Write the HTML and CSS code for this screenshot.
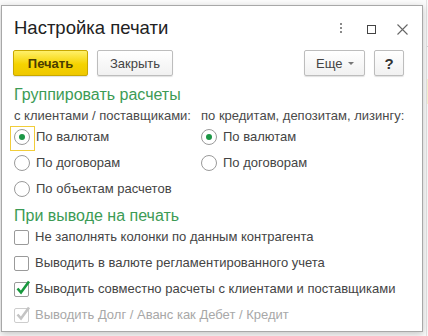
FILE: index.html
```html
<!DOCTYPE html>
<html lang="ru">
<head>
    <meta charset="UTF-8">
    <title>Настройка печати</title>
    <link rel="stylesheet" href="styles.css">
</head>
<body>
    <div class="desk">
        <div class="dialog">
            <div class="title-bar">
                <div class="title">Настройка печати</div>
                <div class="title-icons">
                    <svg class="ico-more" width="4" height="12" viewBox="0 0 4 12">
                        <rect x="1" y="0" width="2" height="2" fill="#8a8a8a"/>
                        <rect x="1" y="4" width="2" height="2" fill="#8a8a8a"/>
                        <rect x="1" y="8" width="2" height="2" fill="#8a8a8a"/>
                    </svg>
                    <svg class="ico-max" width="9" height="9" viewBox="0 0 9 9">
                        <rect x="0.5" y="0.5" width="8" height="8" fill="none" stroke="#444"/>
                    </svg>
                    <svg class="ico-close" width="11" height="11" viewBox="0 0 11 11">
                        <path d="M0.5 0.5 L10.5 10.5 M10.5 0.5 L0.5 10.5" stroke="#666" stroke-width="1.1"/>
                    </svg>
                </div>
            </div>

            <div class="toolbar">
                <button class="btn btn-default">Печать</button>
                <button class="btn">Закрыть</button>
                <div class="spacer"></div>
                <button class="btn btn-more">Еще <span class="caret"></span></button>
                <button class="btn btn-help">?</button>
            </div>

            <div class="group-title">Группировать расчеты</div>
            <div class="columns">
                <div class="col col-left">
                    <div class="sub">с клиентами / поставщиками:</div>
                    <label class="row focused"><span class="radio checked"></span>По валютам</label>
                    <label class="row"><span class="radio"></span>По договорам</label>
                    <label class="row"><span class="radio"></span>По объектам расчетов</label>
                </div>
                <div class="col">
                    <div class="sub">по кредитам, депозитам, лизингу:</div>
                    <label class="row"><span class="radio checked"></span>По валютам</label>
                    <label class="row"><span class="radio"></span>По договорам</label>
                </div>
            </div>

            <div class="group-title second">При выводе на печать</div>
            <label class="row"><span class="check"></span>Не заполнять колонки по данным контрагента</label>
            <label class="row"><span class="check"></span>Выводить в валюте регламентированного учета</label>
            <label class="row"><span class="check checked"><svg width="17" height="17" viewBox="0 0 17 17"><path d="M3.5 8.5 L7 12.5 L15 1.5" fill="none" stroke="#17983d" stroke-width="2.6"/></svg></span>Выводить совместно расчеты с клиентами и поставщиками</label>
            <label class="row disabled"><span class="check checked"><svg width="17" height="17" viewBox="0 0 17 17"><path d="M3.5 8.5 L7 12.5 L15 1.5" fill="none" stroke="#c4c4c4" stroke-width="2.6"/></svg></span>Выводить Долг / Аванс как Дебет / Кредит</label>
        </div>

        <div class="backdrop">
            <div class="bg-head"></div>
            <div class="bg-row"></div>
        </div>
    </div>
</body>
</html>
```

FILE: styles.css
```css
* {
    box-sizing: border-box;
    margin: 0;
    padding: 0;
}

body {
    font-family: Arial, "Liberation Sans", sans-serif;
    font-size: 13px;
    color: #444;
    background: #fbfbfb;
    width: 428px;
    height: 336px;
    overflow: hidden;
}

.desk {
    display: flex;
    align-items: flex-start;
}

.dialog {
    flex: none;
    width: 422px;
    height: 327px;
    margin: 5px 0 0 1px;
    padding: 0 11px 0 11px;
    background: #fff;
    border: 1px solid #a8a8a8;
    box-shadow: 0 2px 7px rgba(0, 0, 0, 0.22);
    position: relative;
    z-index: 1;
}

.backdrop {
    flex: 1;
    height: 336px;
    border-left: 1px solid #e2e2e2;
    margin-left: 3px;
}

.bg-head {
    height: 42px;
    margin-top: 5px;
    border-bottom: 1px solid #d4d4d4;
    background: #fafafa;
}

.bg-row {
    height: 25px;
    margin-top: 32px;
    background: #fbf2d3;
}

/* title */

.title-bar {
    display: flex;
    align-items: center;
    height: 22px;
    margin-top: 11px;
}

.title {
    flex: 1;
    font-size: 18.5px;
    line-height: 22px;
    color: #222;
    padding-left: 1px;
}

.title-icons {
    display: flex;
    align-items: center;
    margin-right: 3px;
}

.ico-more {
    margin-right: 24px;
    margin-top: 2px;
}

.ico-max {
    margin-right: 21px;
    margin-top: 3px;
}

.ico-close {
    margin-top: 2px;
}

/* buttons */

.toolbar {
    display: flex;
    margin-top: 11px;
    height: 26px;
}

.spacer {
    flex: 1;
}

.btn {
    height: 26px;
    min-width: 76px;
    padding: 0 12px;
    font-family: inherit;
    font-size: 13px;
    color: #444;
    background: linear-gradient(#ffffff, #f1f1f1);
    border: 1px solid #bdbdbd;
    border-radius: 2px;
    box-shadow: 0 1px 1px rgba(0, 0, 0, 0.12);
    margin-right: 9px;
}

.btn-default {
    min-width: 75px;
    font-weight: bold;
    color: #4a3d00;
    background: linear-gradient(#fff06a, #f5d300 55%, #efc800);
    border-color: #c8a800;
}

.btn-more {
    min-width: 61px;
    padding: 0 9px 0 11px;
    display: flex;
    align-items: center;
    gap: 6px;
}

.caret {
    width: 0;
    height: 0;
    border-left: 3px solid transparent;
    border-right: 3px solid transparent;
    border-top: 3px solid #777;
    margin-top: 1px;
}

.btn-help {
    min-width: 30px;
    width: 30px;
    padding: 0;
    font-size: 15px;
    font-weight: bold;
    color: #333;
    margin-right: 7px;
}

/* groups */

.group-title {
    font-size: 16px;
    line-height: 20px;
    color: #3c9b55;
    margin-top: 9px;
    padding-left: 1px;
}

.group-title.second {
    margin-top: 5px;
    line-height: 18px;
    margin-bottom: -1px;
}

.columns {
    display: grid;
    grid-template-columns: 187px 1fr;
    margin-top: 3px;
}

.sub {
    line-height: 16px;
    color: #4a4a4a;
    padding-left: 1px;
}

.row {
    display: flex;
    align-items: center;
    height: 26px;
    line-height: 16px;
    color: #444;
    position: relative;
}

.row.disabled {
    color: #a8a8a8;
}

.radio {
    flex: none;
    width: 16px;
    height: 16px;
    margin: 0 6px 0 1px;
    border: 1px solid #9a9a9a;
    border-radius: 50%;
    background: #fff;
    display: flex;
    align-items: center;
    justify-content: center;
}

.radio.checked::after {
    content: "";
    width: 6px;
    height: 6px;
    border-radius: 50%;
    background: #1b9645;
}

.focused::before {
    content: "";
    position: absolute;
    left: -3px;
    top: 2px;
    width: 23px;
    height: 23px;
    border: 1px solid #f1cd3a;
}

.check {
    flex: none;
    width: 15px;
    height: 15px;
    margin: 0 6px 0 1px;
    border: 1px solid #9a9a9a;
    border-radius: 2px;
    background: #fff;
    position: relative;
}

.disabled .check {
    border-color: #cdcdcd;
}

.check svg {
    position: absolute;
    left: -1px;
    top: -3px;
}
```
